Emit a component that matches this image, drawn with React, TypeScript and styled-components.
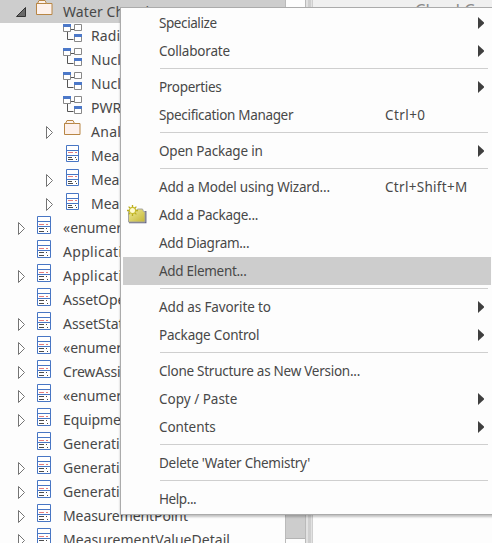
import React from 'react';
import styled, { createGlobalStyle, css } from 'styled-components';

const GlobalStyle = createGlobalStyle`
  * { box-sizing: border-box; }
  body { margin: 0; overflow: hidden; background: #fdfdfd; }
`;

const Window = styled.main`
  position: relative;
  display: flex;
  width: 492px;
  height: 543px;
  overflow: hidden;
  background: #fdfdfd;
  color: #484848;
  font-family: 'Noto Sans', 'Open Sans', sans-serif;
`;

const Tree = styled.div`
  flex: 0 0 285px;
  height: 543px;
  overflow: hidden;
`;

const TreeRow = styled.div<{ $depth: number; $selected?: boolean }>`
  display: flex;
  align-items: flex-start;
  height: 24px;
  padding-left: ${(p) => (p.$depth === 2 ? 44 : 16)}px;
  background: ${(p) => (p.$selected ? '#cdcdcd' : 'transparent')};
  &:first-child { height: 23px; margin-bottom: 1px; }
`;

const ExpanderSlot = styled.span`
  display: flex;
  flex: 0 0 18px;
  height: 22px;
  padding-top: 1px;
  ${TreeRow}:first-child & { padding-top: 0; }
`;

const IconSlot = styled.span`
  display: flex;
  flex: 0 0 29px;
  height: 24px;
  margin-top: -1px;
`;

const TreeLabel = styled.span<{ $spacing?: number }>`
  font-size: 14px;
  line-height: 24px;
  white-space: pre;
  letter-spacing: ${(p) => p.$spacing ?? 0.3}px;
`;

const ScrollBar = styled.div`
  display: flex;
  flex-direction: column;
  flex: 0 0 21px;
  border: solid #bababa;
  border-width: 0 1px;
  background: #fdfdfd;
`;

const ScrollThumb = styled.div`
  height: 520px;
  margin-top: 19px;
  background: #cdcdcd;
  border-bottom: 1px solid #b4b4b4;
`;

const Splitter = styled.div`
  flex: 0 0 7px;
  background: linear-gradient(to right, #e2e2e2 2px, #cfcfcf 2px 5px, #e2e2e2 5px 6px, #cfcfcf 6px);
`;

const Workspace = styled.section`
  flex: 1;
  background: #fdfdfd;
`;

const Header = styled.header`
  height: 24px;
  padding-left: 102px;
  background: #f0f0f0;
  color: #8a8a8a;
  font-size: 16.5px;
  line-height: 20px;
  white-space: nowrap;
  overflow: hidden;
`;

const Menu = styled.nav`
  position: absolute;
  left: 120px;
  top: 7px;
  width: 380px;
  height: 508px;
  padding: 1px 0 0 2px;
  border: 1px solid #ababab;
  background: #fdfdfd;
  box-shadow: 0 2px 2px rgba(0, 0, 0, 0.24);
`;

const MenuRow = styled.div<{ $active?: boolean }>`
  display: grid;
  grid-template-columns: 36px 226px 93px 7px;
  align-items: center;
  width: 368px;
  height: 28px;
  ${(p) => p.$active && css`background: #cdcdcd;`}
`;

const MenuIcon = styled.span`
  display: flex;
  padding-left: 4px;
`;

const MenuText = styled.span<{ $spacing: number }>`
  padding-top: 1px;
  font-size: 13.5px;
  line-height: 27px;
  height: 28px;
  white-space: pre;
  letter-spacing: ${(p) => p.$spacing}px;
`;

const Separator = styled.div`
  height: 1px;
  width: 328px;
  margin: 3px 0 4px 37px;
  background: #cfcfcf;
`;

const ClosedArrow = () => (
  <svg width="9" height="22" viewBox="0 0 9 22">
    <path d="M2.5 5.5v12l6-6z" fill="#fff" stroke="#747474" />
  </svg>
);

const OpenArrow = () => (
  <svg width="12" height="22" viewBox="0 0 12 22">
    <path d="M.5 16.5h9v-9z" fill="#686868" stroke="#333" />
  </svg>
);

const FolderIcon = () => (
  <svg width="20" height="24" viewBox="0 0 20 24">
    <path d="M2.500 4.500h1l1.500-3h6l1.500 3h5.500v11h-15.500z" fill="#fdf1ec" stroke="#b88645" />
    <path d="M2.500 4.500h10" stroke="#b88645" />
  </svg>
);

const DiagramIcon = () => (
  <svg width="20" height="24" viewBox="0 0 20 24" fill="none">
    <path d="M8 6.500h4M5.500 9v7.500h6" stroke="#555" />
    <path d="M12.500 1.500h7v6h-7z" fill="#fff" stroke="#888" />
    <path d="M1.500 1.500h7v7h-7zM12.500 11.500h7v7h-7z" fill="#fff" stroke="#888" />
    <path d="M1 1h8v3H1zM12 11h8v3h-8z" fill="#4c78c8" />
  </svg>
);

const ClassIcon = ({ nested }: { nested?: boolean }) => (
  <svg width="20" height="24" viewBox="0 0 20 24" fill="none">
    <path d={nested ? 'M4.500 2.500h12v16h-12zM4 7.500h13M4 12.500h13' : 'M3.500 1.500h13v17h-13zM3 6.500h14M3 11.500h14'} fill="#fff" stroke="#4876c4" />
    <path d={nested ? 'M6 9.500h5M13 9.500h2' : 'M5 9.500h5M12 9.500h2'} stroke="#e47d7d" />
    <path d={nested ? 'M6 14.500h4M13 14.500h1M6 16.500h5M14 16.500h1' : 'M5 13.500h5M12 13.500h1M5 16.500h5M13 16.500h1'} stroke="#4c4c4c" />
  </svg>
);

const NewPackageIcon = () => (
  <svg width="20" height="20" viewBox="0 0 20 20">
    <defs>
      <linearGradient id="package-fill" x2="1" y2="1">
        <stop stopColor="#f0ec9c" /><stop offset="1" stopColor="#c5b634" />
      </linearGradient>
    </defs>
    <path d="M2 17.500h16.700V6" fill="none" stroke="#666686" strokeWidth="1.500" />
    <path d="M1.500 6.500H9l1.500-2.500h5l1 2.500h1.500v10.500H1.500z" fill="url(#package-fill)" stroke="#a6a6a1" />
    <path d="M5.500 0v11M0 5.500h11M1.600 1.600l7.800 7.800M9.400 1.600l-7.800 7.800" stroke="#b9ad1e" strokeWidth="1.300" />
    <circle cx="5.500" cy="5.500" r="3.100" fill="#fffbd1" stroke="#c9bd32" strokeWidth="1.200" />
  </svg>
);

const SubmenuArrow = () => (
  <svg width="7" height="12" viewBox="0 0 7 12">
    <path d="M0 0v12l6-5.500v-1z" fill="#3f3f3f" />
  </svg>
);

type Node = { label: string; icon: 'folder' | 'diagram' | 'class'; depth: number; arrow?: boolean; open?: boolean; spacing?: number };

const nodes: Node[] = [
  { label: 'Water Chemistry', icon: 'folder', depth: 1, open: true, spacing: 0.1 },
  { label: 'Radiation', icon: 'diagram', depth: 2, spacing: 0.1 },
  { label: 'Nuclear', icon: 'diagram', depth: 2, spacing: 0.1 },
  { label: 'Nuclear', icon: 'diagram', depth: 2, spacing: 0.1 },
  { label: 'PWR', icon: 'diagram', depth: 2, spacing: 0 },
  { label: 'Analysis', icon: 'folder', depth: 2, arrow: true },
  { label: 'Measurement', icon: 'class', depth: 2, spacing: 0 },
  { label: 'Measurement', icon: 'class', depth: 2, arrow: true, spacing: 0 },
  { label: 'Measurement', icon: 'class', depth: 2, arrow: true, spacing: 0 },
  { label: '«enumeration»', icon: 'class', depth: 1, arrow: true, spacing: 0 },
  { label: 'Application', icon: 'class', depth: 1 },
  { label: 'Application', icon: 'class', depth: 1, arrow: true },
  { label: 'AssetOperation', icon: 'class', depth: 1, spacing: -0.05 },
  { label: 'AssetState', icon: 'class', depth: 1, arrow: true, spacing: -0.05 },
  { label: '«enumeration»', icon: 'class', depth: 1, arrow: true, spacing: 0 },
  { label: 'CrewAssignment', icon: 'class', depth: 1, arrow: true, spacing: -0.2 },
  { label: '«enumeration»', icon: 'class', depth: 1, arrow: true, spacing: 0 },
  { label: 'Equipment', icon: 'class', depth: 1, arrow: true, spacing: -0.05 },
  { label: 'Generation', icon: 'class', depth: 1, spacing: 0 },
  { label: 'Generation', icon: 'class', depth: 1, arrow: true, spacing: 0 },
  { label: 'Generation', icon: 'class', depth: 1, arrow: true, spacing: 0 },
  { label: 'MeasurementPoint', icon: 'class', depth: 1, arrow: true, spacing: -0.08 },
  { label: 'MeasurementValueDetail', icon: 'class', depth: 1, arrow: true, spacing: 0.03 },
];

type Item = { label: string; spacing: number; keys?: string; keySpacing?: number; sub?: boolean; icon?: boolean; active?: boolean };

const groups: Item[][] = [
  [{ label: 'Specialize', spacing: -0.42, sub: true }, { label: 'Collaborate', spacing: -0.2, sub: true }],
  [{ label: 'Properties', spacing: -0.32, sub: true }, { label: 'Specification Manager', spacing: -0.33, keys: 'Ctrl+0', keySpacing: 0.43 }],
  [{ label: 'Open Package in', spacing: -0.2, sub: true }],
  [
    { label: 'Add a Model using Wizard...', spacing: -0.19, keys: 'Ctrl+Shift+M', keySpacing: 0.3 },
    { label: 'Add a Package...', spacing: -0.28, icon: true },
    { label: 'Add Diagram...', spacing: -0.29 },
    { label: 'Add Element...', spacing: -0.3, active: true },
  ],
  [{ label: 'Add as Favorite to', spacing: -0.12, sub: true }, { label: 'Package Control', spacing: -0.2, sub: true }],
  [
    { label: 'Clone Structure as New Version...', spacing: -0.26 },
    { label: 'Copy / Paste', spacing: 0, sub: true },
    { label: 'Contents', spacing: -0.08, sub: true },
  ],
  [{ label: "Delete 'Water Chemistry'", spacing: -0.26 }],
  [{ label: 'Help...', spacing: -0.42 }],
];

export default function App() {
  return (
    <Window>
      <GlobalStyle />
      <Tree>
        {nodes.map((n, i) => (
          <TreeRow key={i} $depth={n.depth} $selected={n.open}>
            <ExpanderSlot>{n.open ? <OpenArrow /> : n.arrow ? <ClosedArrow /> : null}</ExpanderSlot>
            <IconSlot>
              {n.icon === 'folder' ? <FolderIcon /> : n.icon === 'diagram' ? <DiagramIcon /> : <ClassIcon nested={n.depth === 2} />}
            </IconSlot>
            <TreeLabel $spacing={n.spacing}>{n.label}</TreeLabel>
          </TreeRow>
        ))}
      </Tree>
      <ScrollBar><ScrollThumb /></ScrollBar>
      <Splitter />
      <Workspace>
        <Header>Cloud Co</Header>
      </Workspace>
      <Menu>
        {groups.map((group, g) => (
          <React.Fragment key={g}>
            {g > 0 && <Separator />}
            {group.map((item) => (
              <MenuRow key={item.label} $active={item.active}>
                <MenuIcon>{item.icon && <NewPackageIcon />}</MenuIcon>
                <MenuText $spacing={item.spacing}>{item.label}</MenuText>
                <MenuText $spacing={item.keySpacing ?? 0}>{item.keys}</MenuText>
                {item.sub && <SubmenuArrow />}
              </MenuRow>
            ))}
          </React.Fragment>
        ))}
      </Menu>
    </Window>
  );
}
